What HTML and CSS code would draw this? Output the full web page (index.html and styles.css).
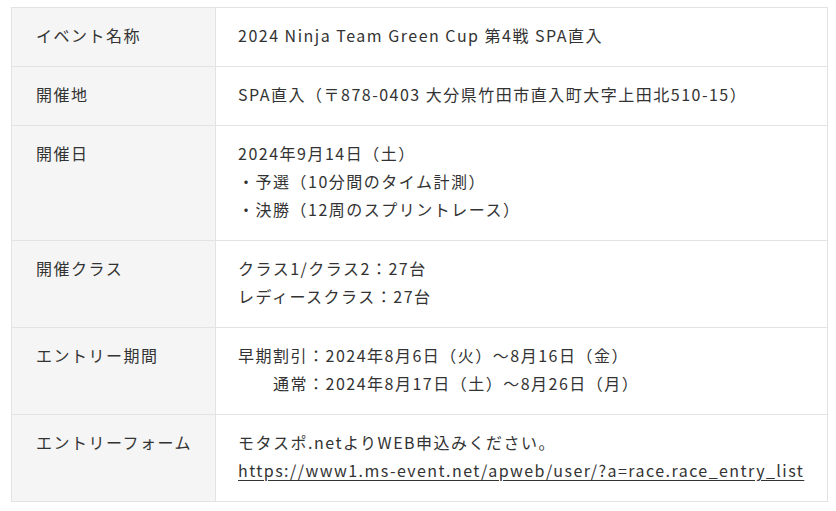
FILE: index.html
```html
<!DOCTYPE html>
<html lang="ja">
<head>
<meta charset="utf-8">
<link rel="stylesheet" href="styles.css">
</head>
<body>
<table class="info">
  <tr><th>イベント名称</th><td>2024 Ninja Team Green Cup 第4戦 SPA直入</td></tr>
  <tr><th>開催地</th><td>SPA直入（〒878-0403 大分県竹田市直入町大字上田北510-15）</td></tr>
  <tr><th>開催日</th><td>2024年9月14日（土）<br>・予選（10分間のタイム計測）<br>・決勝（12周のスプリントレース）</td></tr>
  <tr><th>開催クラス</th><td>クラス1/クラス2：27台<br>レディースクラス：27台</td></tr>
  <tr><th>エントリー期間</th><td>早期割引：2024年8月6日（火）～8月16日（金）<br>　　通常：2024年8月17日（土）～8月26日（月）</td></tr>
  <tr><th>エントリーフォーム</th><td>モタスポ.netよりWEB申込みください。<br><a class="link" href="#">https://www1.ms-event.net/apweb/user/?a=race.race_entry_list</a></td></tr>
</table>
</body>
</html>
```
FILE: styles.css
```css
html, body { margin: 0; padding: 0; background: #fff; }
body { padding: 7px 8px 0 11px; }
.info {
  border-collapse: collapse;
  width: 817px;
  table-layout: fixed;
  font-family: "Noto Sans CJK JP", sans-serif;
  font-size: 16px;
  letter-spacing: 1.5px;
  line-height: 28px;
  color: #333;
}
.info th, .info td {
  border: 1px solid #e3e3e3;
  padding: 13px 0 17px 24px;
  text-align: left;
  vertical-align: top;
  font-weight: normal;
}
.info th { width: 179px; background: #f5f5f5; }
.info td { padding-left: 22px; }
.link { color: #333; white-space: nowrap; letter-spacing: 1.45px; text-underline-offset: 3px; }
```
